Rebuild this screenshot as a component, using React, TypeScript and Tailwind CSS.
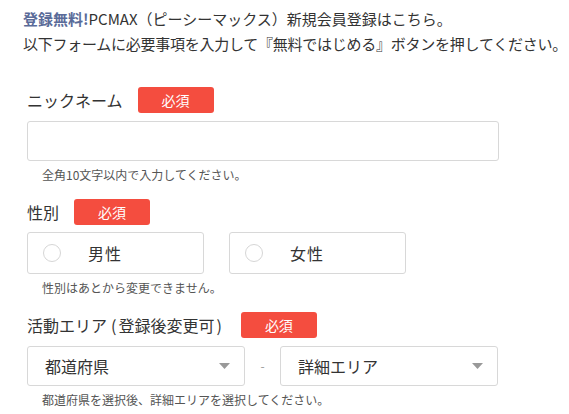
const font = "font-['Noto_Sans_CJK_JP','Noto_Sans',sans-serif]"

function Badge() {
  return (
    <span className="inline-flex h-[26px] w-[76px] items-center justify-center rounded-[3px] bg-[#f44d3f] text-[14px] text-white">
      必須
    </span>
  )
}

function Label({ children }: { children: React.ReactNode }) {
  return (
    <div className="flex h-[26px] items-center gap-[15px]">
      <span className="text-[16px] text-[#333]">{children}</span>
      <Badge />
    </div>
  )
}

function Hint({ text }: { text: string }) {
  return <p className="mt-[4px] pl-[15px] text-[12px] leading-[20px] text-[#555]">{text}</p>
}

function Radio({ text }: { text: string }) {
  return (
    <label className="flex h-[42px] w-[177px] items-center rounded-[3px] border border-[#d8d8d8] bg-white pl-[15px]">
      <span className="h-[18px] w-[18px] rounded-full border border-[#d6d6d6]"></span>
      <span className="ml-[27px] text-[16px] tracking-[1px] text-[#333]">{text}</span>
    </label>
  )
}

function Select({ text }: { text: string }) {
  return (
    <div className="flex h-[40px] w-[218px] items-center justify-between rounded-[3px] border border-[#d8d8d8] bg-white pl-[17px] pr-[14px]">
      <span className="text-[16px] text-[#333]">{text}</span>
      <svg width="11" height="6" viewBox="0 0 11 6">
        <path d="M0 0h11L5.5 6z" fill="#999" />
      </svg>
    </div>
  )
}

export default function App() {
  return (
    <div className={`h-[414px] w-[569px] overflow-hidden bg-white ${font}`}>
      <div className="whitespace-nowrap pl-[23px] pt-[6px] text-[15px] leading-[25px] text-[#333]">
        <p>
          <span className="font-bold text-[#5a6b99]">登録無料!</span>PCMAX（ピーシーマックス）新規会員登録はこちら。
        </p>
        <p className="tracking-[-0.25px]">以下フォームに必要事項を入力して『無料ではじめる』ボタンを押してください。</p>
      </div>

      <div className="w-[499px] pl-[27px]">
        {/* ニックネーム */}
        <div className="mt-[31px]">
          <Label>ニックネーム</Label>
          <input className="mt-[8px] h-[40px] w-full rounded-[3px] border border-[#d8d8d8] bg-white px-3 outline-none" />
          <Hint text="全角10文字以内で入力してください。" />
        </div>

        {/* 性別 */}
        <div className="mt-[14px]">
          <Label>性別</Label>
          <div className="mt-[7px] flex gap-[25px]">
            <Radio text="男性" />
            <Radio text="女性" />
          </div>
          <Hint text="性別はあとから変更できません。" />
        </div>

        {/* 活動エリア */}
        <div className="mt-[14px]">
          <Label>
            活動エリア<span className="pl-[4px] pr-[2px]">(</span>登録後変更可<span className="pl-[2px] pr-[4px]">)</span>
          </Label>
          <div className="mt-[8px] flex items-center">
            <Select text="都道府県" />
            <span className="w-[35px] text-center text-[12px] text-[#999]">-</span>
            <Select text="詳細エリア" />
          </div>
          <Hint text="都道府県を選択後、詳細エリアを選択してください。" />
        </div>
      </div>
    </div>
  )
}
